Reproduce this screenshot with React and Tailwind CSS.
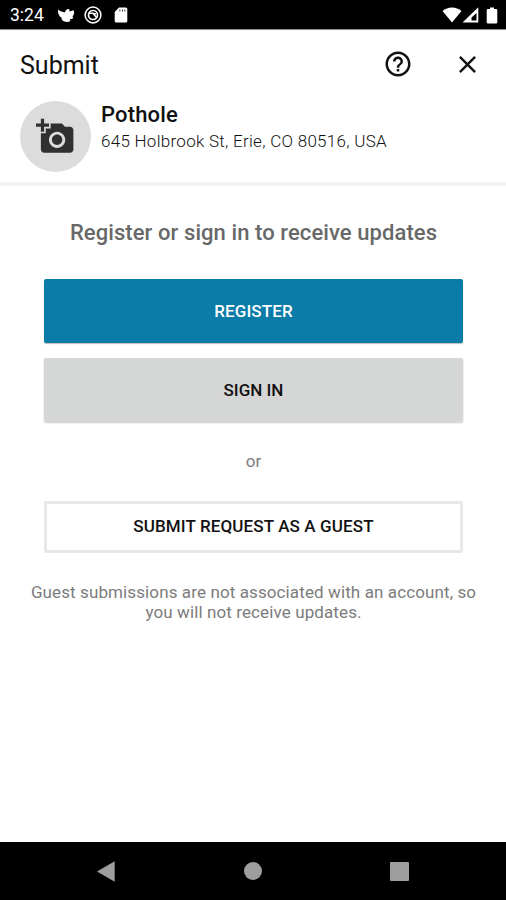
import { MdAddAPhoto, MdHelpOutline, MdClose } from 'react-icons/md'

// ── Android status bar ──────────────────────────────────────
function StatusBar() {
  return (
    <div className="flex h-[30px] shrink-0 items-center border-b border-[#8a8a8a] bg-black pt-px pl-[10px] pr-[8px] text-white">
      <span className="w-[47px] pt-[2px] text-[17.5px] leading-none whitespace-nowrap">3:24</span>
      <svg className="h-[16px] w-[18px]" viewBox="0 0 18 16" fill="currentColor">
        <path d="M1 2.500 C3 4.300 5.500 5 8 5.500 C8.300 3 10.300 1.500 12.300 2.200 L12.500 4.500 L16.500 3.200 C17.600 5 17.300 7.500 15.500 9.500 L16.300 11 C14.500 12.200 14 12.300 12.500 12.500 L13.500 14 C11 15.300 7.800 15.200 6 13.800 C4.500 12.500 4.500 11.800 4.800 11 C2 9.500 0.600 6 1 2.500Z" />
      </svg>
      <svg className="ml-[9px] h-[18px] w-[18px]" viewBox="0 0 18 18" fill="none" stroke="currentColor">
        <circle cx="9" cy="9" r="7.900" strokeWidth="1.500" />
        <circle cx="9" cy="9" r="4.500" strokeWidth="1.700" />
        <path d="M5 7.300 H9 L12.500 11.500 M9 7.300 L12 7.800" strokeWidth="1.500" />
      </svg>
      <svg className="ml-[12px] h-[16px] w-[14px]" viewBox="0 0 14 16" fill="currentColor">
        <path fillRule="evenodd" d="M5 0.500 H12 Q13.300 0.500 13.300 2 V14 Q13.300 15.500 12 15.500 H2 Q0.700 15.500 0.700 14 V5Z M5.500 2.500 V4.500 H6.300 V2.500Z M8 2.500 V4.500 H8.800 V2.500Z M10.500 2.500 V4.500 H11.300 V2.500Z" />
      </svg>
      <svg className="ml-auto h-[16px] w-[20px]" viewBox="0 0 20 16" fill="currentColor">
        <path d="M10 15.500 L0.500 4 C5.500 -0.700 14.500 -0.700 19.500 4Z" />
      </svg>
      <svg className="h-[16px] w-[17px]" viewBox="0 0 17 16" fill="currentColor">
        <path fillRule="evenodd" d="M16.300 0.300 V15.500 H0.500Z M14.500 6 L9.500 10.500 V13.500 H14.500Z" />
      </svg>
      <svg className="ml-[7px] h-[17px] w-[12px]" viewBox="0 0 12 17" fill="currentColor">
        <path d="M4 0.500 H8 V2 H10 Q11.300 2 11.300 3.300 V15.200 Q11.300 16.500 10 16.500 H2 Q0.700 16.500 0.700 15.200 V3.300 Q0.700 2 2 2 H4Z" />
      </svg>
    </div>
  )
}

function Header() {
  return (
    <header className="h-[156px] shrink-0 border-b-[4px] border-[#f2f2f2] px-5">
      <div className="flex h-[70px] items-center">
        <h1 className="pt-[2px] text-[25px] leading-[30px]">Submit</h1>
        <button className="-mt-[2px] ml-auto"><MdHelpOutline size={30} /></button>
        <button className="-mt-px mr-[4px] ml-[40px]"><MdClose size={29} /></button>
      </div>
      <div className="flex">
        <div className="mt-px flex size-[71px] shrink-0 items-center justify-center rounded-full bg-[#dcdcdc] text-[#303030]">
          <MdAddAPhoto size={39} />
        </div>
        <div className="ml-[10px] whitespace-nowrap">
          <div className="mt-[2px] text-[22px] leading-[26px] font-medium tracking-[0.15px]">Pothole</div>
          <div className="mt-px text-[17px] leading-[24px] font-light tracking-[0.28px] text-[#111]">645 Holbrook St, Erie, CO 80516, USA</div>
        </div>
      </div>
    </header>
  )
}

function NavBar() {
  return (
    <nav className="flex h-[58px] shrink-0 items-center justify-between bg-black pl-[96px] pr-[97px] text-[#9e9e9e]">
      <svg className="h-[21px] w-[19px]" viewBox="0 0 19 21" fill="currentColor"><path d="M18.700 0.300 V20.700 L1 10.500Z" /></svg>
      <span className="size-[18px] rounded-full bg-[#9e9e9e]" />
      <span className="size-[19px] rounded-[1px] bg-[#9e9e9e]" />
    </nav>
  )
}

export default function App() {
  const btn = 'flex w-full items-center justify-center rounded-[2px] text-[17px] font-medium whitespace-nowrap'
  return (
    <div className="flex h-[900px] w-[506px] flex-col overflow-hidden bg-white font-[Roboto,sans-serif] text-[#111]">
      <StatusBar />
      <Header />
      <main className="flex flex-1 flex-col items-center pr-[43px] pl-[44px] text-[#7c7c7c]">
        <h2 className="mt-[32px] text-[22px] leading-[30px] font-medium tracking-[0.08px] whitespace-nowrap text-[#686868]">Register or sign in to receive updates</h2>
        <button className={`${btn} mt-[31px] h-[64px] bg-[#0b7ba8] pt-[2px] tracking-[0.1px] text-white shadow-[0_1px_1px_#bbb]`}>REGISTER</button>
        <button className={`${btn} mt-[15px] h-[64px] bg-[#d5d7d6] pt-[2px] text-[#111] shadow-[0_1px_2px_#ccc]`}>SIGN IN</button>
        <div className="mt-[27px] text-[17px] leading-[24px]">or</div>
        <button className={`${btn} mt-[28px] h-[52px] border-[3px] border-[#e8e8e8] tracking-[0.12px] text-[#111]`}>SUBMIT REQUEST AS A GUEST</button>
        <p className="mt-[29px] text-center text-[17px] leading-[20px] tracking-[0.11px] whitespace-nowrap">
          Guest submissions are not associated with an account, so<br />you will not receive updates.
        </p>
      </main>
      <NavBar />
    </div>
  )
}
